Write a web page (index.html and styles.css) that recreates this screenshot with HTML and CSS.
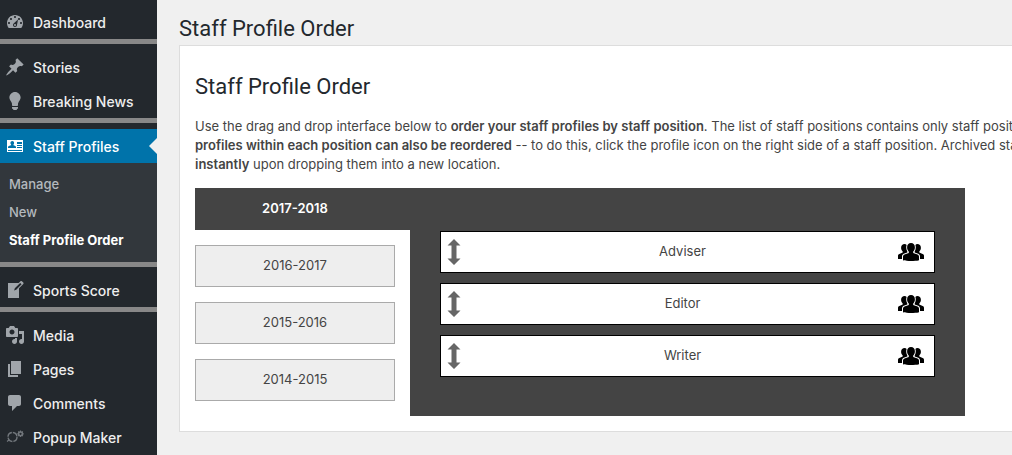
FILE: index.html
```html
<!DOCTYPE html>
<html lang="en">
<head>
<meta charset="utf-8">
<meta name="viewport" content="width=device-width, initial-scale=1">
<title>Staff Profile Order</title>
<link rel="stylesheet" href="styles.css">
</head>
<body>
<svg class="sprite" aria-hidden="true">
  <symbol id="move" viewBox="0 0 14 26"><path d="M7 0l6.500 6.500H9.500v13h4L7 26 .5 19.500h4v-13h-4z"/></symbol>
  <symbol id="group" viewBox="0 0 26 18">
    <path d="M13 0c2.500 0 3.900 1.700 3.900 4.200 0 2-.7 3.400-1.700 4.400v1.300l4.300 1.700c1.100.5 1.500 1.200 1.500 2.400v3.200c-2.200.6-5 .8-8 .8s-5.800-.2-8-.8V14c0-1.200.4-1.900 1.500-2.400l4.300-1.700V8.600c-1-1-1.700-2.400-1.700-4.400C9.100 1.700 10.500 0 13 0z"/>
    <path d="M8.600 2.100C8 3.600 8 6.300 9.300 8.600v.8l-3.600 1.400C4.500 11.400 4 12.400 4 13.600V16H0v-3c0-1.100.4-1.700 1.400-2.100L4.700 9.500V8.400C3.500 7.300 3.100 6 3.100 4.700c0-2.400 1.500-3.700 3.600-3.700.8 0 1.400.4 1.900 1.100z"/>
    <path d="M17.400 2.100c.6 1.500.6 4.200-.7 6.500v.8l3.600 1.400c1.200.6 1.700 1.600 1.700 2.800V16h4v-3c0-1.100-.4-1.700-1.400-2.100l-3.300-1.400V8.400c1.200-1.100 1.600-2.400 1.600-3.700 0-2.400-1.500-3.700-3.600-3.700-.8 0-1.400.4-1.900 1.100z"/>
  </symbol>
</svg>
<div class="app">
  <nav class="sidebar" aria-label="Main menu">
    <ul class="menu">
      <li><a class="menu-link" href="#"><svg class="icon" viewBox="0 0 20 20"><path d="M3.760 16h12.480c1.100-1.370 1.760-3.110 1.760-5 0-4.420-3.580-8-8-8s-8 3.580-8 8c0 1.890.66 3.630 1.760 5zM10 4c.55 0 1 .45 1 1s-.45 1-1 1-1-.45-1-1 .45-1 1-1zM6 6c.55 0 1 .45 1 1s-.45 1-1 1-1-.45-1-1 .45-1 1-1zm8 0c.55 0 1 .45 1 1s-.45 1-1 1-1-.45-1-1 .45-1 1-1zM13 7.500l-1 5.500c0 1.100-.9 2-2 2s-2-.9-2-2c0-.57.24-1.080.63-1.450zM4 10c.55 0 1 .45 1 1s-.45 1-1 1-1-.45-1-1 .45-1 1-1zm12 0c.55 0 1 .45 1 1s-.45 1-1 1-1-.45-1-1 .45-1 1-1z" fill-rule="evenodd"/><circle cx="10" cy="13" r="1"/></svg>Dashboard</a></li>
      <li class="separator"></li>
      <li><a class="menu-link" href="#"><svg class="icon" viewBox="0 0 20 20"><path d="M10.440 3.020l1.820-1.820 6.360 6.350-1.830 1.820c-1.050-.68-2.480-.57-3.410.36l-.75.75c-.92.93-1.040 2.350-.35 3.410l-1.830 1.820-2.410-2.410-2.800 2.790c-.42.42-3.380 2.710-3.800 2.290s1.860-3.390 2.280-3.810l2.790-2.790L4.100 9.360l1.830-1.820c1.050.69 2.480.57 3.400-.36l.75-.75c.93-.92 1.050-2.350.36-3.410z"/></svg>Stories</a></li>
      <li><a class="menu-link" href="#"><svg class="icon" viewBox="0 0 20 20"><path d="M10 1c3.110 0 5.630 2.520 5.630 5.620 0 1.840-2.030 4.580-2.030 4.580-.33.44-.6 1.250-.6 1.800v1c0 .55-.45 1-1 1H8c-.55 0-1-.45-1-1v-1c0-.55-.27-1.360-.6-1.800 0 0-2.020-2.740-2.020-4.580C4.380 3.520 6.890 1 10 1zM7 16.870V16h6v.87c0 .62-.13 1.130-.75 1.130H12c0 .62-.4 1-1.020 1h-2c-.61 0-.98-.38-.98-1h-.25c-.62 0-.75-.51-.75-1.130z"/></svg>Breaking News</a></li>
      <li class="separator"></li>
      <li>
        <a class="menu-link current" href="#"><svg class="icon" viewBox="0 0 20 20"><path fill-rule="evenodd" d="M2 4h16v12H2zM3 12h8v-1c-.3-.9-1.200-1.300-2.500-1.700v-.8c.5-.5.600-1 .6-1.500 0-1.300-.7-2-1.800-2s-1.900.7-1.900 2c0 .5.200 1 .7 1.500v.8C4.500 9.700 3.300 10.100 3 11zM12 6h5v2h-5zM12 9h5v1h-5zM12 11h5v1h-5zM3 14h14v1H3z"/></svg>Staff Profiles</a>
        <ul class="submenu">
          <li><a class="submenu-link" href="#">Manage</a></li>
          <li><a class="submenu-link" href="#">New</a></li>
          <li><a class="submenu-link active" href="#" aria-current="page">Staff Profile Order</a></li>
        </ul>
      </li>
      <li class="separator"></li>
      <li><a class="menu-link" href="#"><svg class="icon" viewBox="0 0 20 20"><path d="M16.890 1.200l1.410 1.410c.39.39.39 1.020 0 1.410L14 8.330V18H3V3h10.670l1.800-1.800c.4-.39 1.030-.4 1.420 0zm-5.660 8.480l5.370-5.360-1.420-1.420-5.360 5.370-.71 2.120z"/></svg>Sports Score</a></li>
      <li class="separator"></li>
      <li><a class="menu-link" href="#"><svg class="icon" viewBox="0 0 20 20"><path fill-rule="evenodd" d="M13 11V4c0-.55-.45-1-1-1h-1.670L9 1H5L3.670 3H2c-.55 0-1 .45-1 1v7c0 .55.45 1 1 1h10c.55 0 1-.45 1-1zM7 4.500c1.380 0 2.500 1.120 2.500 2.500S8.380 9.500 7 9.500 4.500 8.380 4.500 7 5.620 4.500 7 4.500zM14 6h5v10.500c0 1.380-1.120 2.500-2.500 2.500S14 17.880 14 16.500s1.120-2.500 2.500-2.500c.17 0 .34.02.5.05V9h-3V6zm-4 8.050V13h2v3.500c0 1.380-1.120 2.500-2.500 2.500S7 17.880 7 16.500 8.120 14 9.500 14c.17 0 .34.02.5.05z"/></svg>Media</a></li>
      <li><a class="menu-link" href="#"><svg class="icon" viewBox="0 0 20 20"><path d="M6 15V2h10v13H6zm-1 1h8v2H3V5h2v11z"/></svg>Pages</a></li>
      <li><a class="menu-link" href="#"><svg class="icon" viewBox="0 0 20 20"><path d="M5 2h9c1.100 0 2 .9 2 2v7c0 1.100-.9 2-2 2h-2l-5 5v-5H5c-1.100 0-2-.9-2-2V4c0-1.100.9-2 2-2z"/></svg>Comments</a></li>
      <li><a class="menu-link" href="#"><svg class="icon dim" viewBox="0 0 20 20"><circle cx="7.500" cy="10" r="4.500" fill="none" stroke="currentColor" stroke-width="1.400" stroke-dasharray="6 1"/><circle cx="15.500" cy="6.800" r="1.900" fill="none" stroke="currentColor" stroke-width="1.500"/><path d="M15.500 3.500v1.500M15.500 8.600v1.500M12.300 6.800h1.400M17.300 6.800h1.400M13.200 4.500l1 1M16.800 8.100l1 1M17.800 4.500l-1 1M14.200 8.100l-1 1M2 14.500l2-1.500" stroke="currentColor" stroke-width="1.200"/></svg>Popup Maker</a></li>
    </ul>
  </nav>
  <main class="content">
    <h1 class="title">Staff Profile Order</h1>
    <section class="card">
      <h2 class="title">Staff Profile Order</h2>
      <p class="intro">Use the drag and drop interface below to <strong>order your staff profiles by staff position</strong>. The list of staff positions contains only staff positions<br><strong>profiles within each position can also be reordered</strong> -- to do this, click the profile icon on the right side of a staff position. Archived staff<br><strong>instantly</strong> upon dropping them into a new location.</p>
      <div class="order">
        <div class="years" role="tablist" aria-label="School year">
          <button class="year selected" type="button" role="tab" aria-selected="true">2017-2018</button>
          <button class="year" type="button" role="tab" aria-selected="false">2016-2017</button>
          <button class="year" type="button" role="tab" aria-selected="false">2015-2016</button>
          <button class="year" type="button" role="tab" aria-selected="false">2014-2015</button>
        </div>
        <ul class="positions">
          <li class="position"><svg class="move"><use href="#move"/></svg><span>Adviser</span><button class="people" type="button" aria-label="Adviser profiles"><svg class="group"><use href="#group"/></svg></button></li>
          <li class="position"><svg class="move"><use href="#move"/></svg><span>Editor</span><button class="people" type="button" aria-label="Editor profiles"><svg class="group"><use href="#group"/></svg></button></li>
          <li class="position"><svg class="move"><use href="#move"/></svg><span>Writer</span><button class="people" type="button" aria-label="Writer profiles"><svg class="group"><use href="#group"/></svg></button></li>
        </ul>
      </div>
    </section>
  </main>
</div>
</body>
</html>
```
FILE: styles.css
```css
* { box-sizing: border-box; }

body {
  margin: 0;
  background: #f0f0f0;
  color: #444;
  font: 13px/19px Inter, "Liberation Sans", sans-serif;
}

ul { margin: 0; padding: 0; list-style: none; }
a { text-decoration: none; }
button { font: inherit; color: inherit; cursor: pointer; }

.sprite { display: none; }

.app {
  display: flex;
  min-height: 100vh;
  overflow: hidden;
}

.sidebar {
  flex: none;
  width: 157px;
  padding-top: 5px;
  background: #23282d;
}

.menu-link {
  display: flex;
  align-items: center;
  gap: 8px;
  height: 34px;
  padding-left: 5px;
  color: #eee;
  font-size: 14px;
  font-weight: 500;
  white-space: nowrap;
}

.icon {
  flex: none;
  width: 20px;
  height: 20px;
  fill: #a0a5aa;
}

.dim { color: #72777c; }

.separator {
  height: 5px;
  margin-bottom: 6px;
  background: #888;
}

.current {
  position: relative;
  background: #0073aa;
  color: #fff;
}

.current .icon { fill: #fff; }

.current::after {
  content: "";
  position: absolute;
  right: 0;
  top: 9px;
  border: 8px solid transparent;
  border-left-width: 0;
  border-right-color: #f0f0f0;
}

.submenu {
  padding: 7px 0 8px;
  background: #32373c;
}

.submenu-link {
  display: block;
  padding-left: 9px;
  color: #b4b9be;
  font-weight: 500;
  line-height: 28px;
  white-space: nowrap;
}

.submenu-link.active { color: #fff; font-weight: 700; }

.content {
  flex: 1;
  min-width: 0;
  padding: 13px 0 20px 22px;
}

.title {
  margin: 0;
  color: #23282d;
  font-family: Roboto, "Liberation Sans", sans-serif;
  font-size: 22px;
  font-weight: 400;
  line-height: 32px;
}

.card {
  margin-right: -20px;
  padding: 25px 15px 15px;
  border: 1px solid #ddd;
  background: #fff;
}

.intro {
  margin: 14px 0;
  white-space: nowrap;
}

.intro strong { font-weight: 600; }

.order {
  display: flex;
  max-width: 770px;
}

.years {
  display: flex;
  flex: none;
  flex-direction: column;
  gap: 15px;
  width: 215px;
  padding-bottom: 15px;
}

.year {
  width: 200px;
  height: 42px;
  padding: 0 0 2px;
  border: 1px solid #aaa;
  background: #eee;
}

.year.selected {
  width: 215px;
  padding-right: 15px;
  border-color: #444;
  background: #444;
  color: #fff;
  font-weight: 600;
}

.positions {
  display: flex;
  flex: 1;
  flex-direction: column;
  gap: 10px;
  padding: 43px 30px 0;
  background: #444;
}

.position {
  display: grid;
  grid-template-columns: 20px 1fr 26px;
  align-items: center;
  height: 42px;
  padding: 0 10px 1px 6px;
  border: 1px solid #000;
  background: #fff;
  text-align: center;
}

.move {
  width: 14px;
  height: 26px;
  fill: #666;
}

.people {
  display: flex;
  padding: 0;
  border: 0;
  background: none;
}

.group {
  width: 26px;
  height: 18px;
  fill: #000;
}
```
